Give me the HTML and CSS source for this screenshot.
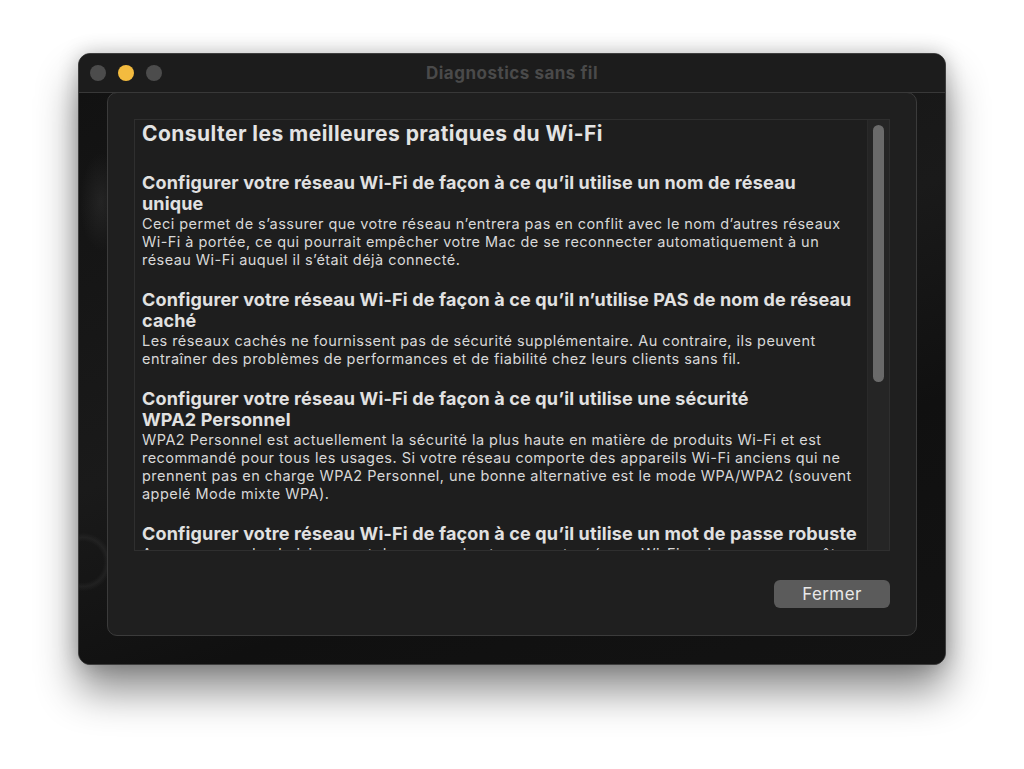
FILE: index.html
```html
<!DOCTYPE html>
<html lang="fr">
<head>
<meta charset="utf-8">
<title>Diagnostics sans fil</title>
<link rel="stylesheet" href="styles.css">
</head>
<body>
<div class="window">
  <div class="titlebar">
    <div class="lights">
      <span class="light gray"></span>
      <span class="light yellow"></span>
      <span class="light gray"></span>
    </div>
    <div class="title">Diagnostics sans fil</div>
  </div>
  <div class="winbody">
    <div class="sheet">
      <div class="textbox">
        <div class="content">
          <h1 class="doc-title">Consulter les meilleures pratiques du Wi-Fi</h1>

          <h2 class="sec-title">Configurer votre réseau Wi-Fi de façon à ce qu’il utilise un nom de réseau<br>unique</h2>
          <p class="sec-body">Ceci permet de s’assurer que votre réseau n’entrera pas en conflit avec le nom d’autres réseaux<br>Wi-Fi à portée, ce qui pourrait empêcher votre Mac de se reconnecter automatiquement à un<br>réseau Wi-Fi auquel il s’était déjà connecté.</p>

          <h2 class="sec-title">Configurer votre réseau Wi-Fi de façon à ce qu’il n’utilise PAS de nom de réseau<br>caché</h2>
          <p class="sec-body">Les réseaux cachés ne fournissent pas de sécurité supplémentaire. Au contraire, ils peuvent<br>entraîner des problèmes de performances et de fiabilité chez leurs clients sans fil.</p>

          <h2 class="sec-title">Configurer votre réseau Wi-Fi de façon à ce qu’il utilise une sécurité<br>WPA2 Personnel</h2>
          <p class="sec-body">WPA2 Personnel est actuellement la sécurité la plus haute en matière de produits Wi-Fi et est<br>recommandé pour tous les usages. Si votre réseau comporte des appareils Wi-Fi anciens qui ne<br>prennent pas en charge WPA2 Personnel, une bonne alternative est le mode WPA/WPA2 (souvent<br>appelé Mode mixte WPA).</p>

          <h2 class="sec-title">Configurer votre réseau Wi-Fi de façon à ce qu’il utilise un mot de passe robuste</h2>
          <p class="sec-body">Assurez-vous de choisir un mot de passe robuste pour votre réseau Wi-Fi, qui ne pourra pas être</p>
        </div>
        <div class="scrolltrack">
          <div class="thumb"></div>
        </div>
      </div>
      <div class="actions">
        <button class="btn">Fermer</button>
      </div>
    </div>
  </div>
</div>
</body>
</html>
```

FILE: styles.css
```css
* { box-sizing: border-box; }

html, body {
  margin: 0;
  padding: 0;
  background: #ffffff;
}

body {
  width: 1024px;
  height: 769px;
  overflow: hidden;
  padding: 53px 0 0 78px;
  font-family: Inter, "Noto Sans", "Liberation Sans", sans-serif;
}

.window {
  width: 868px;
  height: 612px;
  border-radius: 12px;
  border: 1px solid #3e3e3e;
  background: #131313;
  overflow: hidden;
  display: flex;
  flex-direction: column;
  box-shadow: 0 26px 42px rgba(0, 0, 0, 0.45), 0 0 20px rgba(0, 0, 0, 0.22);
}

.titlebar {
  height: 39px;
  flex: none;
  background: #1c1c1c;
  border-bottom: 1px solid #383838;
  display: flex;
  align-items: center;
  position: relative;
}

.lights {
  display: flex;
  gap: 12px;
  padding-left: 11px;
}

.light {
  width: 16px;
  height: 16px;
  border-radius: 50%;
  display: block;
}
.light.gray { background: #4c4c4c; }
.light.yellow { background: #f3bb3f; }

.title {
  position: absolute;
  left: 0;
  right: 0;
  top: 0;
  bottom: 0;
  display: flex;
  align-items: center;
  justify-content: center;
  font-weight: 700;
  font-size: 17px;
  letter-spacing: 0.5px;
  color: #4a4a4a;
  pointer-events: none;
}

.winbody {
  flex: 1;
  padding: 0 28px 28px 28px;
  display: flex;
  margin-top: -1px;
  background:
    radial-gradient(ellipse 30px 70px at 22px 110px, rgba(70,70,70,0.3), rgba(0,0,0,0) 70%),
    radial-gradient(circle 34px at 4px 470px, rgba(0,0,0,0) 60%, rgba(70,70,70,0.22) 72%, rgba(0,0,0,0) 86%),
    linear-gradient(160deg, #121212 0%, #1a1a1a 45%, #101010 70%, #131313 100%);
}

.sheet {
  flex: 1;
  border: 1px solid #3b3b3b;
  border-radius: 10px;
  background: #1f1f1f;
  padding: 26px;
  display: flex;
  flex-direction: column;
}

.textbox {
  height: 432px;
  flex: none;
  border: 1px solid #2f2f2f;
  background: #1e1e1e;
  display: flex;
  overflow: hidden;
}

.content {
  flex: 1;
  padding: 1px 0 0 7px;
  white-space: nowrap;
  overflow: hidden;
  color: #dcdcdc;
}

.doc-title {
  margin: 0 0 25px 0;
  font-size: 21px;
  line-height: 26px;
  font-weight: 700;
  letter-spacing: 0.45px;
  color: #e3e3e3;
}

.sec-title {
  margin: 0 0 1px 0;
  font-size: 18px;
  line-height: 21px;
  font-weight: 700;
  letter-spacing: 0.15px;
  color: #e1e1e1;
}

.sec-body {
  margin: 0 0 20px 0;
  font-size: 14.5px;
  line-height: 18px;
  font-weight: 400;
  letter-spacing: 0.45px;
  color: #d8d8d8;
}

.scrolltrack {
  width: 22px;
  flex: none;
  background: #252525;
  border-left: 1px solid #2a2a2a;
  padding: 5px 0 0 5px;
}

.thumb {
  width: 11px;
  height: 257px;
  border-radius: 6px;
  background: #6a6a6a;
}

.actions {
  margin-top: 29px;
  display: flex;
  justify-content: flex-end;
}

.btn {
  width: 116px;
  height: 28px;
  border: none;
  border-radius: 6px;
  background: #5b5b5b;
  color: #e8e8e8;
  font-family: Inter, "Noto Sans", "Liberation Sans", sans-serif;
  font-size: 17px;
  letter-spacing: 0.4px;
  padding: 0;
}
```
